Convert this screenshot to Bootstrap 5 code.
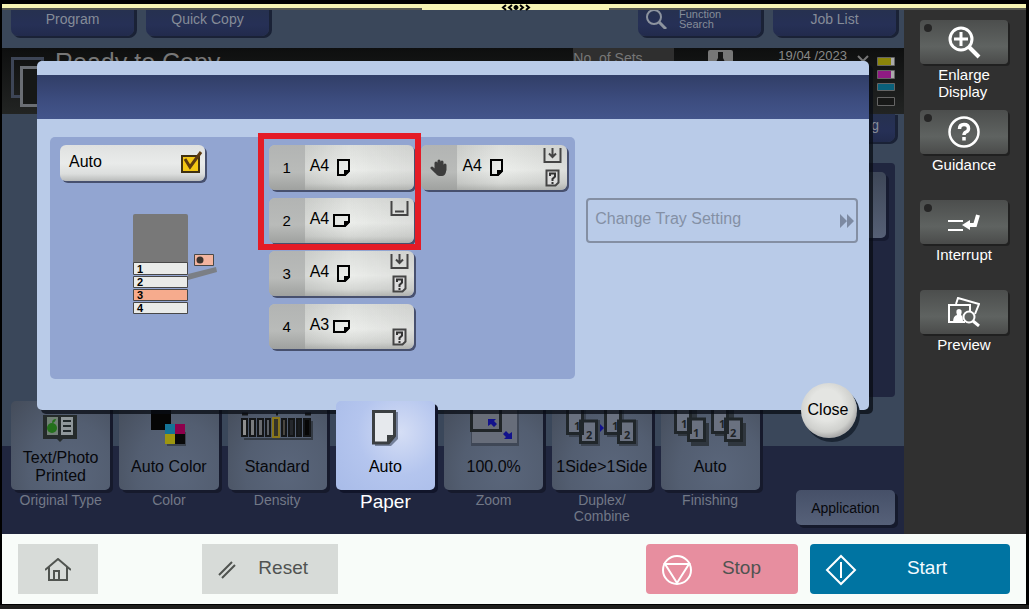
<!DOCTYPE html>
<html lang="en">
<head>
<meta charset="utf-8">
<meta name="viewport" content="width=device-width, initial-scale=1">
<title>Copy - Paper</title>
<link href="https://cdn.jsdelivr.net/npm/bootstrap@5.3.0/dist/css/bootstrap.min.css" rel="stylesheet">
<style>
  body { background: #000; font-family: "Liberation Sans", Arial, sans-serif; font-size: 16px; line-height: 18px; color: #000; }
  button { font: inherit; border: 0; padding: 0; color: inherit; }
  svg { display: block; flex: none; }
  .device { padding: 0 3px 5px 2px; background: linear-gradient(#1e1e1c, #1e1e1c) bottom / 100% 4px no-repeat #000; }

  /* pull-down strip */
  .strip { border-top: 4px solid #000; height: 8px; background: #f5f3b2; box-shadow: 0 2px #55574f; z-index: 5; }
  .strip-tab { left: 41%; right: 40.7%; top: 0; height: 6px; background: #f5f3b2; }

  /* copier screen */
  .lcd { background: #3a475a; color: #8b919b; font-size: 14px; min-width: 0; }
  .topbar { height: 40px; padding: 0 8px 0 9px; gap: 12px; }
  .blue-key { width: 123px; height: 28px; border-radius: 0 0 7px 7px; background: linear-gradient(#26314f, #263056 60%, #222b4c); box-shadow: 2px 2px #1a2236, 3px 1px #1a2236; line-height: 16px; padding-bottom: 7px; color: #858c98; }
  .find-label { font-size: 11px; line-height: 10px; padding-left: 12px; }
  .status { height: 66px; background: linear-gradient(#0e0f0f, #222423); padding: 0 9px; }
  .ready { font-size: 25px; line-height: 28px; color: #777; }
  .sets { width: 101px; height: 20px; background: #2f2f2f; color: #777; line-height: 21px; }
  .clock { font-size: 13px; line-height: 15px; color: #888; }
  .work { height: 287px; padding: 0 9px; }
  .work-panel { width: 200px; height: 234px; background: #20263f; border-radius: 0 4px 4px 0; padding: 9px; }
  .work-tile { width: 90px; height: 66px; border-radius: 5px; background: linear-gradient(#3e4758, #566075); box-shadow: 3px 3px #161b30; }
  .functions { height: 133px; padding: 0 9px; gap: 9px; background: linear-gradient(#3a475a 45px, #20263f 45px); }
  .func { flex: 1 1 0; min-width: 0; }
  .func-key { height: 89px; border-radius: 5px; color: #07080c; font-size: 16px; line-height: 18px; background: radial-gradient(ellipse at 60% 80%, #5a667b, #535e71 50%, #444c5a 100%); box-shadow: 3px 3px #161a2c; padding-bottom: 5px; }
  .func-name { height: 36px; white-space: nowrap; }
  .func-caption { margin: 2px 0 0; line-height: 16px; text-align: center; color: #727887; }
  .func.current { z-index: 4; }
  .current .func-key { color: #000; background: radial-gradient(circle at 65% 35%, #d5def5 0, #b4c5ee 50%, #a8bbe8 100%); box-shadow: 3px 3px #11152a; }
  .current .func-caption { font-size: 19px; line-height: 20px; color: #fff; }
  .app-key { height: 35px; border-radius: 5px; background: linear-gradient(#465068, #566179); color: #07080c; box-shadow: 3px 3px #151a2c; margin: 89px 0 0 27px; }

  /* paper dialog */
  .paper-dialog { top: 53px; left: 35px; right: 35px; background: #b9cbe8; border-radius: 5px; box-shadow: 4px 4px rgba(8, 12, 20, .75); color: #000; font-size: 16px; z-index: 3; }
  .dialog-title { margin-top: 14px; height: 44px; background: linear-gradient(#313e67, #3d4d80 60%, #43558b); }
  .dialog-body { padding: 18px 11px 31px 13px; gap: 11px; }
  .tray-panel { flex: 0 0 65%; min-height: 242px; display: grid; grid-template-columns: 202fr 146fr 146fr; gap: 7px; align-items: start; padding: 8px 8px 8px 10px; border-radius: 5px; background: #92a5d1; }
  .side { padding-top: 61px; }
  .light-key { border-radius: 6px; background: linear-gradient(#dfe1e0, #e9ebea 50%, #dcdedd 80%, #b9bbba); box-shadow: 2px 2px #47506e; }
  .auto-key { width: 145px; height: 36px; padding: 0 1px 2px 9px; cursor: pointer; }
  .auto-key input { appearance: none; width: 24px; height: 25px; margin: 0; background: url("data:image/svg+xml,%3Csvg xmlns='http://www.w3.org/2000/svg' width='24' height='25'%3E%3Crect x='2' y='6' width='17' height='16' fill='%23f3c614' stroke='%23403010' stroke-width='2'/%3E%3Cpath d='M5 9l5 8L21 2' fill='none' stroke='%235c3a10' stroke-width='3'/%3E%3C/svg%3E") no-repeat; }
  .printer { margin: 33px 0 0 73px; font: bold 11px "Liberation Sans", Arial, sans-serif; }
  .tray-list { gap: 8px; }
  .tray { height: 45px; width: 100%; background: linear-gradient(90deg, rgba(110,112,110,.32), rgba(255,255,255,0) 55%, rgba(130,130,130,.15)), linear-gradient(#dcdedb, #eceeeb 55%, #d6d8d5 85%, #b6b8b5); }
  .tray-no { width: 36px; height: 45px; border-radius: 6px 0 0 6px; background: linear-gradient(#b2b4b3, #b9bbb9 60%, #9fa19f); font-size: 15px; }
  .tray-size { padding: 0 4px 3px 5px; }
  .tray-marks { width: 19px; height: 45px; margin: 0 5px 0 auto; }
  .marked::after { content: ""; position: absolute; inset: -12px -7px -7px -11px; border: 6px solid #e41b26; z-index: 1; pointer-events: none; }
  .setting-key { height: 45px; border: 2px solid #848fa3; border-radius: 4px; background: none; color: #8490a5; padding: 0 2px 3px 7px; }
  .close-key { width: 56px; height: 55px; right: 12px; bottom: -28px; border-radius: 50%; background: radial-gradient(circle at 45% 40%, #e4e5e2 35%, #cfd0cd 60%, #aaa 72%); box-shadow: 3px 4px #1b2533; padding: 0 2px 2px 0; }

  /* hard-key column */
  .keys { width: 122px; background: #303030; color: #fff; font-size: 15px; line-height: 17px; padding: 12px 2px 0 0; }
  .key-item { height: 90px; }
  .gray-key { width: 88px; height: 44px; border-radius: 4px; background: linear-gradient(#4c4e4d, #5f6361 60%, #4a4b4a); box-shadow: 2px 2px #202020; margin-bottom: 2px; }
  .lamp::before { content: ""; position: absolute; left: 4px; top: 4px; width: 8px; height: 8px; border-radius: 50%; background: #262626; }

  /* bottom bar */
  .bottom { background: #f8fcf9; padding: 10px 16px; font-size: 19px; line-height: 22px; color: #505351; }
  .bottom button { height: 50px; }
  .bottom .flat-key { background: #d7dbd8; }
  .home-key { width: 80px; margin-right: 104px; }
  .reset-key { width: 136px; padding: 0 30px 3px 16px; }
  .stop-key { width: 152px; border-radius: 4px; background: #e78e9f; margin-right: 12px; padding: 0 37px 2px 15px; }
  .start-key { width: 200px; border-radius: 4px; background: #0074a2; color: #f4fbff; padding: 0 63px 2px 15px; }
</style>
</head>
<body>
<div class="device d-flex flex-column min-vh-100">
  <div class="strip position-relative">
    <div class="strip-tab position-absolute d-flex justify-content-center">
      <svg width="30" height="7" viewBox="0 0 30 7" fill="none" stroke="#000" stroke-width="2"><path d="M5 1L2 3.500l3 2.500M11 1L8 3.500l3 2.500M19 1l3 2.500L19 6M25 1l3 2.500L25 6"/><circle cx="15" cy="3.500" r="2" fill="#000" stroke-width="1"/></svg>
    </div>
  </div>

  <div class="d-flex flex-fill">
    <main class="lcd flex-fill position-relative">
      <div class="topbar d-flex align-items-start">
        <button class="blue-key">Program</button>
        <button class="blue-key">Quick Copy</button>
        <button class="blue-key ms-auto d-flex align-items-center ps-2">
          <svg width="21" height="20" viewBox="0 0 21 20" fill="none" stroke="#8d949f" stroke-width="2"><circle cx="8" cy="8" r="7"/><path d="M13 13l7 7" stroke-width="3"/></svg>
          <span class="find-label text-start">Function<br>Search</span>
        </button>
        <button class="blue-key">Job List</button>
      </div>

      <div class="status d-flex align-items-start">
        <svg width="44" height="60" viewBox="0 0 44 60" fill="none"><path d="M1.500 10.500h30v38h-30z" stroke="#3d4556" stroke-width="3"/><path d="M10.500 19.500h30v38h-30z" fill="#161817" stroke="#6a6e74" stroke-width="3"/></svg>
        <div class="ready">Ready to Copy</div>
        <div class="sets ms-auto">No. of Sets</div>
        <svg class="mx-4" width="56" height="14" viewBox="-10 0 56 14"><rect y="2" width="25" height="14" rx="2" fill="#777"/><path d="M10 4h5v6l2 4H8l2-4z" fill="#151515"/></svg>
        <div class="clock">19/04 /2023</div>
        <svg class="mx-2" width="14" height="14" viewBox="0 0 14 14" fill="none" stroke="#777" stroke-width="2"><path d="M3 8l5 5 5-5"/></svg>
        <svg width="18" height="60" viewBox="0 0 18 60" stroke="#656565"><path d="M.5 9.500h17v8H.5z" fill="#8b850a"/><path d="M14 10h3v7h-3z" fill="#aaa" stroke="none"/><path d="M.5 22.500h17v8H.5z" fill="#8f1a83"/><path d="M14 23h3v7h-3z" fill="#aaa" stroke="none"/><path d="M.5 35.500h17v7H.5z" fill="#0a607a"/><path d="M.5 49.500h17v8H.5z" fill="#171817"/></svg>
      </div>

      <div class="work d-flex flex-column align-items-end">
        <button class="blue-key text-end pe-3">g</button>
        <div class="work-panel mt-auto mb-1 d-flex justify-content-end"><div class="work-tile"></div></div>
      </div>

      <div class="functions d-flex align-items-start">
        <div class="func">
          <button class="func-key w-100 d-flex flex-column align-items-center">
            <svg width="72" height="48" viewBox="0 0 72 48"><path d="M18 14h34v24H38l-3 3-3-3H18z" fill="#252b2b"/><path d="M22 16h11v18H22z" fill="#718075"/><path d="M36 16h12v18H36z" fill="#8f979a"/><circle cx="27" cy="27" r="5" fill="#24701c"/><path d="M27 22q0-4 4-4-1 4-4 4" fill="#24701c"/><path d="M38 20h8M38 25h8M38 30h8" stroke="#20282a" stroke-width="2"/></svg>
            <span class="func-name d-flex align-items-center">Text/Photo<br>Printed</span>
          </button>
          <p class="func-caption">Original Type</p>
        </div>
        <div class="func">
          <button class="func-key w-100 d-flex flex-column align-items-center">
            <svg width="72" height="48" viewBox="0 0 72 48"><path d="M49 31h4v14H34v-4z" fill="#3b434f"/><path d="M18 0h20v29H18z" fill="#050505"/><path d="M32 23h10v10H32z" fill="#147396"/><path d="M42 23h10v10H42z" fill="#8d004c"/><path d="M32 33h10v10H32z" fill="#9d9610"/><path d="M42 33h10v10H42z" fill="#090909"/></svg>
            <span class="func-name d-flex align-items-center">Auto Color</span>
          </button>
          <p class="func-caption">Color</p>
        </div>
        <div class="func">
          <button class="func-key w-100 d-flex flex-column align-items-center">
            <svg width="72" height="48" viewBox="0 0 72 48" stroke="#141618"><path d="M3 38h68V20" fill="none" stroke="#333a44" stroke-width="2"/><g stroke-width="2"><path d="M1 18h5v17H1z" fill="#8f8f8f"/><path d="M9 18h5v17H9z" fill="#7a7c7e"/><path d="M17 18h5v17h-5z" fill="#686a6e"/><path d="M25 18h4v17h-4z" fill="#5c6066"/><path d="M41 18h4v17h-4z" fill="#4a4640"/><path d="M48 18h5v17h-5z" fill="#24272c"/><path d="M56 18h4v17h-4z" fill="#181b1e"/><path d="M63 18h6v17h-6z" fill="#060606"/><path d="M32 17h6v19h-6z" fill="#35332a" stroke="#8a761a"/></g><path d="M1 13h6M64 13h6M35 13h2" stroke-width="3"/></svg>
            <span class="func-name d-flex align-items-center">Standard</span>
          </button>
          <p class="func-caption">Density</p>
        </div>
        <div class="func current position-relative">
          <button class="func-key w-100 d-flex flex-column align-items-center">
            <svg width="72" height="48" viewBox="0 0 72 48"><path d="M26 11h23v27l-7 7H26z" fill="#74809a"/><path d="M24.500 10.500h21V35l-6 7h-15z" fill="#e6e9ed" stroke="#3b3f42" stroke-width="3"/><path d="M45 34h-7v8z" fill="#3b3f42"/></svg>
            <span class="func-name d-flex align-items-center">Auto</span>
          </button>
          <p class="func-caption">Paper</p>
        </div>
        <div class="func">
          <button class="func-key w-100 d-flex flex-column align-items-center">
            <svg width="72" height="48" viewBox="0 0 72 48"><path d="M13 4h48v41H13z" fill="#3f4756"/><path d="M14 4h45v38H14z" fill="#676d7a"/><path d="M13.500 0h29v29.500h-29z" fill="#686d78" stroke="#202528" stroke-width="3"/><path d="M30 18h8l-2 2 3 3-3 3-3-3-3 2zM54 38h-8l2-2-3-3 3-3 3 3 3-2z" fill="#12128c"/></svg>
            <span class="func-name d-flex align-items-center">100.0%</span>
          </button>
          <p class="func-caption">Zoom</p>
        </div>
        <div class="func">
          <button class="func-key w-100 d-flex flex-column align-items-center">
            <svg width="72" height="48" viewBox="0 0 72 48" font-family="Open Sans, sans-serif" font-weight="700" font-size="11"><g id="pair"><path d="M3 6h17v30H3zM15 19h19v26H15z" fill="#3b4350"/><path d="M1.500 4h15v28.500h-15zM14.500 20h16v21.500h-16z" fill="#6a7180" stroke="#20262a" stroke-width="3"/></g><use href="#pair" x="38"/><g fill="#202428"><text x="8" y="29">1</text><text x="20" y="38">2</text><text x="46" y="29">1</text><text x="58" y="38">2</text></g><path d="M34 23l4 4-4 4z" fill="#12128c"/></svg>
            <span class="func-name d-flex align-items-center">1Side&gt;1Side</span>
          </button>
          <p class="func-caption">Duplex/<br>Combine</p>
        </div>
        <div class="func">
          <button class="func-key w-100 d-flex flex-column align-items-center">
            <svg width="72" height="48" viewBox="0 0 72 48" font-family="Open Sans, sans-serif" font-weight="700" font-size="11"><g id="stack"><path d="M4 9h19v26H4zM17 22h18v23H17z" fill="#2f363e"/><path d="M1.500 6h15v25.500h-15zM14.500 18h16v21.500h-16z" fill="#6a7180" stroke="#20262a" stroke-width="3"/></g><use href="#stack" x="37"/><g fill="#202428"><text x="7" y="27">1</text><text x="19" y="36">1</text><text x="45" y="27">1</text><text x="56" y="36">2</text></g></svg>
            <span class="func-name d-flex align-items-center">Auto</span>
          </button>
          <p class="func-caption">Finishing</p>
        </div>
        <button class="func app-key">Application</button>
      </div>

      <section class="paper-dialog position-absolute" role="dialog" aria-label="Paper">
        <div class="dialog-title"></div>
        <div class="dialog-body d-flex">
          <div class="tray-panel">
            <div>
              <label class="light-key auto-key d-flex align-items-center justify-content-between">Auto <input type="checkbox" checked></label>
              <svg class="printer" width="87" height="102" viewBox="0 0 87 102"><rect width="55" height="60" rx="2" fill="#787878"/><path d="M55 60l28-7 1 5-29 8z" fill="#7b7f86"/><g fill="#e9ebe9" stroke="#484848"><path d="M.5 48.500h54v12H.5zM.5 62.500h54v11H.5zM.5 88.500h54v11H.5z"/><path d="M.5 75.500h54v11H.5z" fill="#f6ab8d"/><path d="M61.500 40.500h19v11h-19z" fill="#f3b49f"/></g><circle cx="67" cy="46" r="3.500" fill="#3c342f"/><text x="4" y="59">1</text><text x="4" y="72">2</text><text x="4" y="85">3</text><text x="4" y="98">4</text></svg>
            </div>
            <div class="tray-list d-flex flex-column">
              <div class="marked position-relative d-flex flex-column tray-list">
                <button class="light-key tray d-flex align-items-center">
                  <span class="tray-no d-flex align-items-center justify-content-center">1</span><span class="tray-size">A4</span>
                  <svg class="ms-1" width="14" height="18" viewBox="0 0 14 18"><path d="M1 1h11v11l-4 4H1z" fill="none" stroke="#000" stroke-width="2"/><path d="M13 11v1l-5 5H7v-6z"/></svg>
                </button>
                <button class="light-key tray d-flex align-items-center">
                  <span class="tray-no d-flex align-items-center justify-content-center">2</span><span class="tray-size">A4</span>
                  <svg width="18" height="14" viewBox="0 0 18 14"><path d="M1 1h15v7l-4 4H1z" fill="none" stroke="#000" stroke-width="2"/><path d="M17 7v1l-5 5h-1V7z"/></svg>
                  <svg class="tray-marks" viewBox="0 0 19 45" fill="none" stroke="#444" stroke-width="2"><path d="M1.500 3v14h16V3M5 13.500h9"/></svg>
                </button>
              </div>
              <button class="light-key tray d-flex align-items-center">
                <span class="tray-no d-flex align-items-center justify-content-center">3</span><span class="tray-size">A4</span>
                <svg class="ms-1" width="14" height="18" viewBox="0 0 14 18"><path d="M1 1h11v11l-4 4H1z" fill="none" stroke="#000" stroke-width="2"/><path d="M13 11v1l-5 5H7v-6z"/></svg>
                <svg class="tray-marks" viewBox="0 0 19 45"><g id="low" fill="none" stroke="#444" stroke-width="2"><path d="M1.500 3v14h16V3M9.500 3v9M6 8.500l3.500 3.500L13 8.500"/></g><g id="unk"><path d="M3.500 25.500h12v12l-3 3h-9z" fill="#ddd" stroke="#444" stroke-width="2"/><path d="M7 31v-2.500h5v3L9.500 34v2M9.500 37v2" fill="none" stroke="#333" stroke-width="2"/></g></svg>
              </button>
              <button class="light-key tray d-flex align-items-center">
                <span class="tray-no d-flex align-items-center justify-content-center">4</span><span class="tray-size">A3</span>
                <svg width="18" height="14" viewBox="0 0 18 14"><path d="M1 1h15v7l-4 4H1z" fill="none" stroke="#000" stroke-width="2"/><path d="M17 7v1l-5 5h-1V7z"/></svg>
                <svg class="tray-marks" viewBox="0 0 19 45"><use href="#unk"/></svg>
              </button>
            </div>
            <button class="light-key tray d-flex align-items-center" aria-label="Bypass tray A4">
              <span class="tray-no d-flex align-items-center justify-content-center"><svg width="18" height="18" viewBox="0 0 18 18" fill="none" stroke="#3d3d3d" stroke-width="3" stroke-linecap="round"><path d="M6 10V4M9 9V2M12 9V3M15 11V6M6 13l-4-4"/><path d="M5 9h11v4q-1 4-4 4H9q-3-1-4-4z" fill="#3d3d3d" stroke="none"/></svg></span><span class="tray-size">A4</span>
              <svg class="ms-1" width="14" height="18" viewBox="0 0 14 18"><path d="M1 1h11v11l-4 4H1z" fill="none" stroke="#000" stroke-width="2"/><path d="M13 11v1l-5 5H7v-6z"/></svg>
              <svg class="tray-marks" viewBox="0 0 19 45"><use href="#low"/><use href="#unk"/></svg>
            </button>
          </div>
          <div class="side flex-fill">
            <button class="setting-key w-100 d-flex align-items-center justify-content-between" disabled>Change Tray Setting
              <svg class="mt-1" width="14" height="14" viewBox="0 0 14 14" fill="#7d8aa2"><path d="M0 0l7 7-7 7zM7 0l7 7-7 7z"/></svg>
            </button>
          </div>
        </div>
        <button class="close-key position-absolute">Close</button>
      </section>
    </main>

    <aside class="keys d-flex flex-column flex-shrink-0">
      <div class="key-item d-flex flex-column align-items-center">
        <button class="gray-key lamp position-relative d-flex align-items-center justify-content-center" aria-labelledby="k1"><svg width="34" height="34" viewBox="0 0 34 34" fill="none" stroke="#fff" stroke-width="3"><circle cx="14" cy="14" r="11"/><path d="M14 7v14M7 14h14"/><path d="M22 22l10 10" stroke-width="4"/></svg></button>
        <span id="k1">Enlarge<br>Display</span>
      </div>
      <div class="key-item d-flex flex-column align-items-center">
        <button class="gray-key lamp position-relative d-flex align-items-center justify-content-center" aria-labelledby="k2"><svg width="32" height="32" viewBox="0 0 32 32" fill="none" stroke="#fff"><circle cx="16" cy="16" r="14.500" stroke-width="2.500"/><path d="M11.500 13q0-4.500 4.500-4.500t4.500 4q0 2.500-2.500 3.500-2 1-2 3M16 21v3.500" stroke-width="3.500"/></svg></button>
        <span id="k2">Guidance</span>
      </div>
      <div class="key-item d-flex flex-column align-items-center">
        <button class="gray-key lamp position-relative d-flex align-items-center justify-content-center" aria-labelledby="k3"><svg width="32" height="18" viewBox="0 0 32 18" fill="none" stroke="#fff" stroke-width="2"><path d="M0 8h15M0 17h15"/><path d="M30 2l-3 10h-8" stroke-width="4"/><path d="M14 12l8-5v10z" fill="#fff" stroke="none"/></svg></button>
        <span id="k3">Interrupt</span>
      </div>
      <div class="key-item d-flex flex-column align-items-center">
        <button class="gray-key d-flex align-items-center justify-content-center" aria-labelledby="k4"><svg width="32" height="30" viewBox="0 0 32 30" fill="none" stroke="#fff" stroke-width="2"><path d="M8 7l2-6 21 6-4 10M17 25H1V8h21v6"/><path d="M5 25q0-6 4-7-2-6 2-6t2 6q2 1 2 7z" fill="#fff" stroke="none"/><circle cx="21" cy="20" r="5.500"/><path d="M25 24l6 5" stroke-width="3"/></svg></button>
        <span id="k4">Preview</span>
      </div>
    </aside>
  </div>

  <footer class="bottom d-flex align-items-center">
    <button class="flat-key home-key d-flex align-items-center justify-content-center" aria-label="Home"><svg width="26" height="23" viewBox="0 0 26 23" fill="none" stroke="#505450" stroke-width="2"><path d="M0 12L13 1l13 11M4 9v13h18V9M9 22v-9h5v9"/></svg></button>
    <button class="flat-key reset-key d-flex align-items-center justify-content-between"><svg class="mt-1" width="18" height="18" viewBox="0 0 18 18" fill="none" stroke="#505450" stroke-width="2"><path d="M1 14L14 1M4 17L17 4"/></svg>Reset</button>
    <button class="stop-key ms-auto d-flex align-items-center justify-content-between"><svg class="mt-1" width="32" height="32" viewBox="0 0 32 32" fill="none" stroke="#fff" stroke-width="2"><circle cx="16" cy="16" r="14"/><path d="M4 10h24L16 29z"/></svg>Stop</button>
    <button class="start-key d-flex align-items-center justify-content-between"><svg class="mt-1" width="32" height="32" viewBox="0 0 32 32" fill="none" stroke="#fff" stroke-width="2"><path d="M16 2l14 14-14 14L2 16zM16 8v16"/></svg>Start</button>
  </footer>
</div>
<script src="https://cdn.jsdelivr.net/npm/bootstrap@5.3.0/dist/js/bootstrap.bundle.min.js"></script>
</body>
</html>
